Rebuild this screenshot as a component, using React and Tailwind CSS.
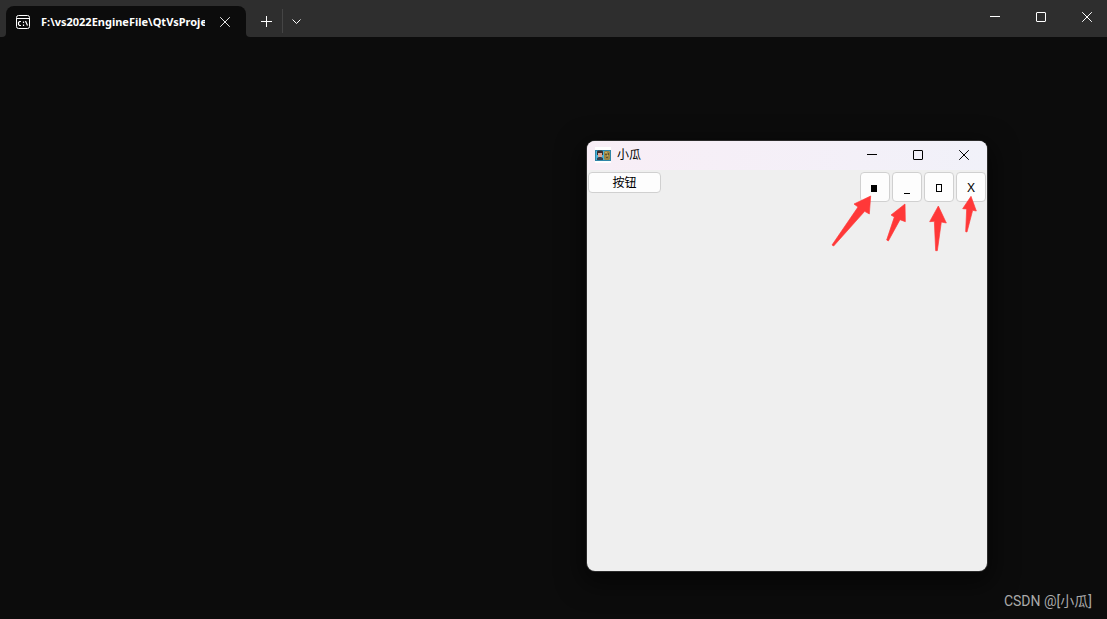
import React from 'react';

const MinimizeIcon = () => (
  <svg width="10" height="10" viewBox="0 0 10 10" fill="none" stroke="currentColor" aria-hidden="true">
    <path d="M0 4.5h10" />
  </svg>
);

const MaximizeIcon = () => (
  <svg width="10" height="10" viewBox="0 0 10 10" fill="none" stroke="currentColor" aria-hidden="true">
    <rect x="0.5" y="0.5" width="9" height="9" rx="0.5" />
  </svg>
);

const CloseIcon = () => (
  <svg width="10" height="10" viewBox="0 0 10 10" fill="none" stroke="currentColor" aria-hidden="true">
    <path d="M0.2 0.2l9.6 9.6M9.8 0.2l-9.6 9.6" />
  </svg>
);

const systemButtons = [
  { label: 'Minimize', Icon: MinimizeIcon },
  { label: 'Maximize', Icon: MaximizeIcon },
  { label: 'Close', Icon: CloseIcon },
];

const toolButtons = [
  { label: 'Restore', shape: 'filled' },
  { label: 'Minimize', shape: 'line' },
  { label: 'Maximize', shape: 'outline' },
  { label: 'Close', shape: 'cross' },
];

const ToolGlyph = ({ shape }) => {
  if (shape === 'cross') {
    return <span className="pt-px">X</span>;
  }
  return (
    <svg width="8" height="16" viewBox="0 0 8 16" fill="none" aria-hidden="true">
      {shape === 'filled' && <rect x="0" y="6" width="6" height="7" fill="#000" />}
      {shape === 'line' && <path d="M1 14.5h6" stroke="#000" />}
      {shape === 'outline' && <rect x="1.5" y="5.5" width="5" height="7" stroke="#000" />}
    </svg>
  );
};

const TerminalIcon = () => (
  <svg width="16" height="16" viewBox="0 0 16 16" fill="none" stroke="#fff" aria-hidden="true">
    <rect x="1.5" y="1.5" width="13" height="13" rx="2" />
    <path d="M1.5 4.5h13" />
    <path d="M6 7.5H4.5L3.5 8.5v2l1 1H6M8.5 7.500v1.500M8.5 10.500v1.500M10.5 7l2 4.5" strokeWidth="1.2" />
  </svg>
);

const AppIcon = () => (
  <svg width="16" height="16" viewBox="0 0 16 16" aria-hidden="true">
    <rect width="16" height="16" fill="#fff" />
    <rect y="3" width="16" height="11" fill="#2f86a8" />
    <rect x="1" y="4" width="14" height="9" fill="#48b4dc" />
    <path d="M2 13v-2l2-1h2l2 1v2z" fill="#34404f" />
    <rect x="3" y="5" width="4" height="5" fill="#dba898" />
    <path d="M2 8V4.500L3 3.500h4L8 4.500V8H7V6H3v2z" fill="#3a2b2d" />
    <path d="M9 5l1 -1h4l1 1v7l-1 1h-4l-1-1z" fill="#9c8642" />
    <path d="M10 7h2v1h-2zM13 6h1v2h-1zM11 10h2v1h-2z" fill="#5f5334" />
    <path d="M10 5h2v1h-2zM12 8h1v1h-1z" fill="#c7ad62" />
  </svg>
);

const Arrows = () => (
  <svg
    className="pointer-events-none absolute top-11 right-[-3px]"
    width="170"
    height="75"
    viewBox="0 0 510 225"
    fill="#ff3838"
    stroke="#ff3838"
    strokeWidth="2"
    aria-hidden="true"
  >
    <path d="M152 33L148 87L134 79L41 183L36 180L114 66L102 57Z" />
    <path d="M255 57L256 110L240 104L205 168L200 165L223 96L213 90Z" />
    <path d="M355 63L379 114L364 111L352 197L347 197L343 109L329 110Z" />
    <path d="M453 34L469 78L458 76L441 141L437 140L440 72L428 71Z" />
  </svg>
);

const TerminalHeader = () => (
  <header className="flex h-[37px] justify-between bg-[#2e2e2e] text-white">
    <div className="flex items-end pl-0.5">
      <div className="size-1 bg-[#0c0c0c]">
        <div className="size-full rounded-br bg-[#2e2e2e]" />
      </div>
      <div className="flex h-[31px] w-60 items-center rounded-t-lg bg-[#0c0c0c] pl-[9px]">
        <TerminalIcon />
        <span className="ml-2.5 w-[164px] overflow-hidden text-[11px] leading-4 font-bold whitespace-nowrap font-['Noto_Sans',sans-serif]">
          F:\vs2022EngineFile\QtVsProject
        </span>
        <button type="button" aria-label="Close tab" className="ml-2.5 flex size-5 items-center justify-center text-[#e4e4e4]">
          <CloseIcon />
        </button>
      </div>
      <div className="size-1 bg-[#0c0c0c]">
        <div className="size-full rounded-bl bg-[#2e2e2e]" />
      </div>
      <div className="flex h-[31px] items-center pb-px">
        <button type="button" aria-label="New tab" className="flex h-6 w-8 items-center justify-center">
          <svg width="11" height="11" viewBox="0 0 11 11" stroke="currentColor" aria-hidden="true">
            <path d="M0 5.5h11M5.500 0v11" />
          </svg>
        </button>
        <button
          type="button"
          aria-label="Open menu"
          className="flex h-6 w-7 items-center justify-center border-l border-[#454545]"
        >
          <svg width="9" height="5" viewBox="0 0 9 5" fill="none" stroke="currentColor" aria-hidden="true">
            <path d="M0.500 0.500l4 4l4 -4" />
          </svg>
        </button>
      </div>
    </div>
    <div className="flex h-[34px] gap-1.5">
      {systemButtons.map(({ label, Icon }) => (
        <button key={label} type="button" aria-label={label} className="flex w-10 items-center justify-center">
          <Icon />
        </button>
      ))}
    </div>
  </header>
);

const DialogWindow = () => (
  <section className="absolute top-[141px] right-[120px] flex h-[430px] w-[400px] flex-col rounded-lg bg-[#efefef] text-black shadow-[0_8px_24px_6px_rgba(0,0,0,0.5)] ring-1 ring-[#2b2b2b]">
    <div className="flex h-[29px] items-center justify-between rounded-t-lg bg-linear-to-r from-[#f8eef6] to-[#f1f1f9] pb-px">
      <div className="flex items-center gap-1.5 pl-2">
        <AppIcon />
        <h1 className="text-xs">小瓜</h1>
      </div>
      <div className="flex h-full">
        {systemButtons.map(({ label, Icon }) => (
          <button key={label} type="button" aria-label={label} className="flex w-[46px] items-center justify-center">
            <Icon />
          </button>
        ))}
      </div>
    </div>
    <div className="flex items-start justify-between px-px pt-0.5">
      <button
        type="button"
        className="flex h-[21px] w-[73px] items-center justify-center rounded border border-[#d0d0d0] bg-[#fdfdfd] text-xs"
      >
        按钮
      </button>
      <div className="flex gap-0.5">
        {toolButtons.map(({ label, shape }) => (
          <button
            key={label}
            type="button"
            aria-label={label}
            className="flex size-[30px] items-center justify-center rounded border border-[#d0d0d0] bg-[#fdfdfd] text-[13px]"
          >
            <ToolGlyph shape={shape} />
          </button>
        ))}
      </div>
    </div>
    <Arrows />
  </section>
);

const App = () => {
  return (
    <div className="relative flex min-h-screen flex-col bg-[#0c0c0c] font-['Noto_Sans','Noto_Sans_CJK_SC',sans-serif]">
      <TerminalHeader />
      <main className="flex flex-1 flex-col justify-end">
        <DialogWindow />
        <p className="self-end pr-[15px] pb-2 text-sm leading-5 text-[#aaaaaa] font-['Roboto','Noto_Sans_CJK_SC',sans-serif]">
          CSDN @[小瓜]
        </p>
      </main>
    </div>
  );
};

export default App;
